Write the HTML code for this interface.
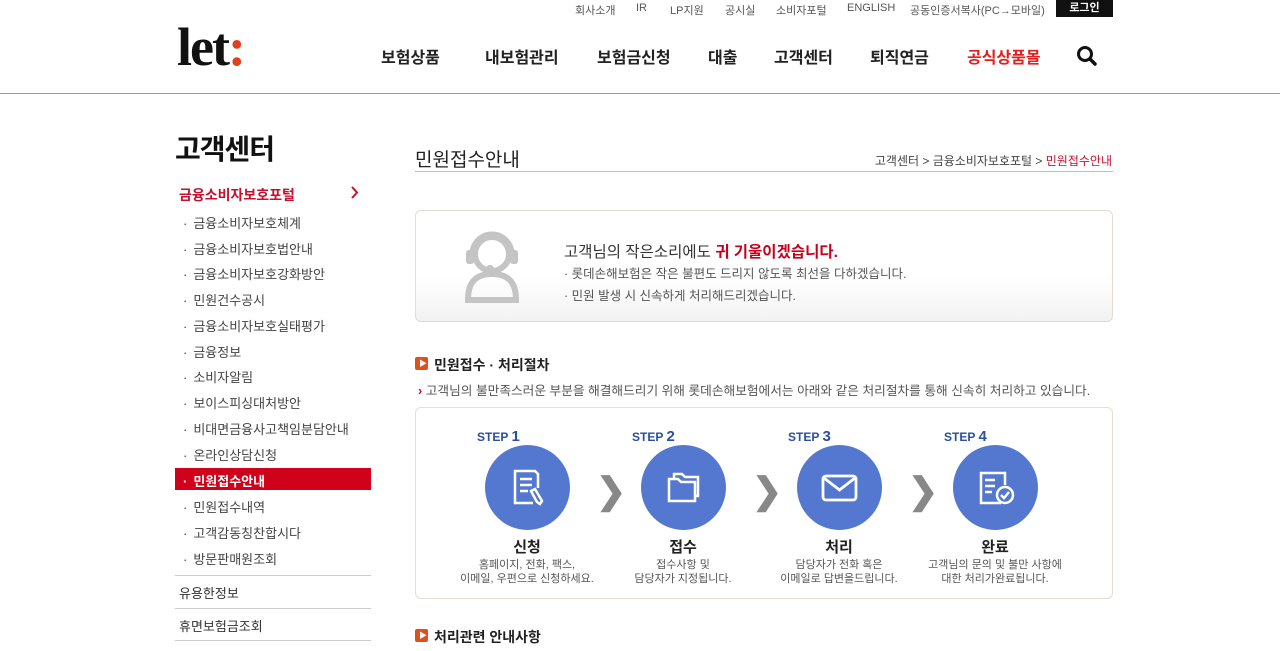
<!DOCTYPE html>
<html><head><meta charset="utf-8"><style>
*{margin:0;padding:0;box-sizing:border-box}
body{width:1280px;height:651px;overflow:hidden;background:#fff;font-family:"Liberation Sans","Noto Sans CJK KR",sans-serif;color:#333;position:relative}
.a{position:absolute;white-space:nowrap}
.util{top:2px;font-size:11px;color:#555}
.gnb{top:44px;font-size:16px;font-weight:bold;color:#222}
.sub{left:183px;font-size:13px;color:#444}
.sub span{margin-left:6px}
.step{font-size:12px;font-weight:bold;color:#2a4fa0;top:428px}
.step b{font-size:15px}
.c{position:absolute;top:445px;width:85px;height:85px;border-radius:50%;background:#5478d0}
.t{top:536px;font-size:15px;font-weight:bold;color:#222;text-align:center;width:160px}
.d{top:558px;font-size:11px;color:#555;text-align:center;width:170px;line-height:14px}
.arr{position:absolute;top:470px;font-size:36px;color:#888;font-weight:bold}
</style></head><body>
<div class="a util" style="left:575px">회사소개</div>
<div class="a util" style="left:636px">IR</div>
<div class="a util" style="left:670px">LP지원</div>
<div class="a util" style="left:725px">공시실</div>
<div class="a util" style="left:776px">소비자포털</div>
<div class="a util" style="left:847px">ENGLISH</div>
<div class="a util" style="left:910px">공동인증서복사(PC→모바일)</div>
<div class="a" style="left:1056px;top:0;width:57px;height:17px;background:#111;color:#fff;font-size:11px;font-weight:bold;text-align:center;line-height:17px">로그인</div>
<div class="a" style="left:177px;top:17px;font-family:'Liberation Serif',serif;font-size:54px;font-weight:bold;color:#111;letter-spacing:-2px;line-height:60px">let<span style="color:#e0401e">:</span></div>
<div class="a gnb" style="left:381px">보험상품</div>
<div class="a gnb" style="left:485px">내보험관리</div>
<div class="a gnb" style="left:597px">보험금신청</div>
<div class="a gnb" style="left:708px">대출</div>
<div class="a gnb" style="left:774px">고객센터</div>
<div class="a gnb" style="left:870px">퇴직연금</div>
<div class="a gnb" style="left:967px;color:#e0201e">공식상품몰</div>
<svg class="a" style="left:1076px;top:45px" width="22" height="22" viewBox="0 0 22 22"><circle cx="9" cy="9" r="6.5" fill="none" stroke="#111" stroke-width="3"/><path d="M14 14l5 5" stroke="#111" stroke-width="3.5" stroke-linecap="round"/></svg>
<div class="a" style="left:0;top:93px;width:1280px;height:1px;background:#999"></div>

<div class="a" style="left:175px;top:128px;font-size:28px;font-weight:bold;color:#111;letter-spacing:-1px">고객센터</div>
<div class="a" style="left:179px;top:185px;font-size:14px;font-weight:bold;color:#c8102e">금융소비자보호포털</div>
<svg class="a" style="left:350px;top:186px" width="10" height="13"><path d="M2 1l5 5.5L2 12" stroke="#c8102e" stroke-width="2" fill="none"/></svg>
<div class="a sub" style="top:213px">·<span>금융소비자보호체계</span></div>
<div class="a sub" style="top:239px">·<span>금융소비자보호법안내</span></div>
<div class="a sub" style="top:264px">·<span>금융소비자보호강화방안</span></div>
<div class="a sub" style="top:290px">·<span>민원건수공시</span></div>
<div class="a sub" style="top:316px">·<span>금융소비자보호실태평가</span></div>
<div class="a sub" style="top:342px">·<span>금융정보</span></div>
<div class="a sub" style="top:367px">·<span>소비자알림</span></div>
<div class="a sub" style="top:393px">·<span>보이스피싱대처방안</span></div>
<div class="a sub" style="top:419px">·<span>비대면금융사고책임분담안내</span></div>
<div class="a sub" style="top:445px">·<span>온라인상담신청</span></div>
<div class="a" style="left:175px;top:468px;width:196px;height:22px;background:#d0021b"></div>
<div class="a sub" style="top:471px;color:#fff;font-weight:bold">·<span>민원접수안내</span></div>
<div class="a sub" style="top:497px">·<span>민원접수내역</span></div>
<div class="a sub" style="top:523px">·<span>고객감동칭찬합시다</span></div>
<div class="a sub" style="top:549px">·<span>방문판매원조회</span></div>
<div class="a" style="left:175px;top:575px;width:196px;height:1px;background:#ccc"></div>
<div class="a" style="left:179px;top:583px;font-size:13px;color:#333">유용한정보</div>
<div class="a" style="left:175px;top:608px;width:196px;height:1px;background:#ccc"></div>
<div class="a" style="left:179px;top:616px;font-size:13px;color:#333">휴면보험금조회</div>
<div class="a" style="left:175px;top:640px;width:196px;height:1px;background:#ccc"></div>

<div class="a" style="left:415px;top:145px;font-size:19px;color:#222">민원접수안내</div>
<div class="a" style="right:168px;top:152px;font-size:12px;color:#444">고객센터 &gt; 금융소비자보호포털 &gt; <span style="color:#c8102e">민원접수안내</span></div>
<div class="a" style="left:415px;top:171px;width:698px;height:1px;background:#bbb"></div>

<div class="a" style="left:415px;top:210px;width:698px;height:112px;border:1px solid #e0dcd0;border-radius:6px;background:linear-gradient(#fff 60%,#f2f2f2)"></div>
<svg class="a" style="left:460px;top:226px" width="64" height="78" viewBox="0 0 64 78"><circle cx="32" cy="28" r="17" fill="none" stroke="#c4c4c4" stroke-width="6"/><path d="M12 28a20 20 0 0 1 40 0" fill="none" stroke="#c4c4c4" stroke-width="5"/><rect x="6" y="24" width="8" height="14" rx="3" fill="#c4c4c4"/><rect x="50" y="24" width="8" height="14" rx="3" fill="#c4c4c4"/><path d="M8 74c0-20 10-26 24-26s24 6 24 26z" fill="none" stroke="#c4c4c4" stroke-width="6"/><circle cx="30" cy="43" r="4" fill="#c4c4c4"/></svg>
<div class="a" style="left:564px;top:240px;font-size:15.5px;color:#333">고객님의 작은소리에도 <span style="color:#c8001a;font-weight:bold">귀 기울이겠습니다.</span></div>
<div class="a" style="left:564px;top:263px;font-size:12.5px;color:#555">· 롯데손해보험은 작은 불편도 드리지 않도록 최선을 다하겠습니다.</div>
<div class="a" style="left:564px;top:285px;font-size:12.5px;color:#555">· 민원 발생 시 신속하게 처리해드리겠습니다.</div>

<div class="a" style="left:415px;top:357px;width:13px;height:13px;background:#e0501e;border-radius:2px"></div>
<div class="a" style="left:419px;top:358px;font-size:8px;color:#fff">▶</div>
<div class="a" style="left:434px;top:355px;font-size:14px;font-weight:bold;color:#222">민원접수 · 처리절차</div>
<div class="a" style="left:418px;top:380px;font-size:12.7px;color:#555"><span style="color:#c8102e;font-weight:bold">›</span> 고객님의 불만족스러운 부분을 해결해드리기 위해 롯데손해보험에서는 아래와 같은 처리절차를 통해 신속히 처리하고 있습니다.</div>

<div class="a" style="left:415px;top:407px;width:698px;height:192px;border:1px solid #e4dfd3;border-radius:6px"></div>
<div class="a step" style="left:477px">STEP <b>1</b></div>
<div class="a step" style="left:632px">STEP <b>2</b></div>
<div class="a step" style="left:788px">STEP <b>3</b></div>
<div class="a step" style="left:944px">STEP <b>4</b></div>
<div class="c" style="left:485px"></div><div class="c" style="left:641px"></div><div class="c" style="left:797px"></div><div class="c" style="left:953px"></div>
<svg class="a" style="left:505px;top:465px" width="45" height="45" viewBox="0 0 45 45" fill="none" stroke="#fff" stroke-width="2.5"><path d="M28 38H10V6h20l3 3v14"/><path d="M15 14h12M15 20h12M15 26h8"/><path d="M30 24l7 12-2 3-3-2-6-11z"/></svg>
<svg class="a" style="left:661px;top:465px" width="45" height="45" viewBox="0 0 45 45" fill="none" stroke="#fff" stroke-width="2.5"><path d="M8 14v22h26V17H20l-3-3z"/><path d="M13 14V9h8l3 3h13v19h-3"/></svg>
<svg class="a" style="left:817px;top:465px" width="45" height="45" viewBox="0 0 45 45" fill="none" stroke="#fff" stroke-width="2.8"><rect x="6" y="11" width="33" height="24" rx="3"/><path d="M7 13l15.5 12L38 13"/></svg>
<svg class="a" style="left:973px;top:465px" width="45" height="45" viewBox="0 0 45 45" fill="none" stroke="#fff" stroke-width="2.5"><path d="M28 38H8V8h24v12"/><path d="M12 15h10M12 21h10M12 27h7"/><circle cx="32" cy="30" r="8"/><path d="M28 30l3 3 5-6"/></svg>
<div class="arr" style="left:596px">❯</div><div class="arr" style="left:752px">❯</div><div class="arr" style="left:908px">❯</div>
<div class="a t" style="left:447px">신청</div><div class="a t" style="left:603px">접수</div><div class="a t" style="left:759px">처리</div><div class="a t" style="left:915px">완료</div>
<div class="a d" style="left:442px">홈페이지, 전화, 팩스,<br>이메일, 우편으로 신청하세요.</div>
<div class="a d" style="left:598px">접수사항 및<br>담당자가 지정됩니다.</div>
<div class="a d" style="left:754px">담당자가 전화 혹은<br>이메일로 답변을드립니다.</div>
<div class="a d" style="left:910px">고객님의 문의 및 불만 사항에<br>대한 처리가완료됩니다.</div>

<div class="a" style="left:415px;top:629px;width:13px;height:13px;background:#e0501e;border-radius:2px"></div>
<div class="a" style="left:419px;top:630px;font-size:8px;color:#fff">▶</div>
<div class="a" style="left:434px;top:627px;font-size:14px;font-weight:bold;color:#222">처리관련 안내사항</div>
</body></html>
